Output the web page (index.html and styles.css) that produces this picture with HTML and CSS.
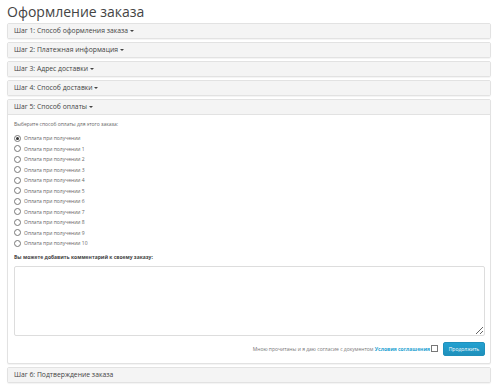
FILE: index.html
```html
<!DOCTYPE html>
<html lang="ru">
<head>
  <meta charset="UTF-8" />
  <title>Оформление заказа</title>
  <link rel="stylesheet" href="styles.css">
</head>
<body>

  <h1>Оформление заказа</h1>

  <div class="panel">
    <div class="panel-heading">Шаг 1: Способ оформления заказа <span class="caret"></span></div>
  </div>
  <div class="panel">
    <div class="panel-heading">Шаг 2: Платежная информация <span class="caret"></span></div>
  </div>
  <div class="panel">
    <div class="panel-heading">Шаг 3: Адрес доставки <span class="caret"></span></div>
  </div>
  <div class="panel">
    <div class="panel-heading">Шаг 4: Способ доставки <span class="caret"></span></div>
  </div>
  <div class="panel">
    <div class="panel-heading">Шаг 5: Способ оплаты <span class="caret"></span></div>
    <div class="panel-body">
      <p class="intro">Выберите способ оплаты для этого заказа:</p>
      <div class="radios">
        <label class="radio"><span class="dot checked"></span>Оплата при получении</label>
        <label class="radio"><span class="dot"></span>Оплата при получении 1</label>
        <label class="radio"><span class="dot"></span>Оплата при получении 2</label>
        <label class="radio"><span class="dot"></span>Оплата при получении 3</label>
        <label class="radio"><span class="dot"></span>Оплата при получении 4</label>
        <label class="radio"><span class="dot"></span>Оплата при получении 5</label>
        <label class="radio"><span class="dot"></span>Оплата при получении 6</label>
        <label class="radio"><span class="dot"></span>Оплата при получении 7</label>
        <label class="radio"><span class="dot"></span>Оплата при получении 8</label>
        <label class="radio"><span class="dot"></span>Оплата при получении 9</label>
        <label class="radio"><span class="dot"></span>Оплата при получении 10</label>
      </div>
      <p class="comment-label">Вы можете добавить комментарий к своему заказу:</p>
      <textarea class="comment"></textarea>
      <div class="buttons">
        <span class="agree">Мною прочитаны и я даю согласие с документом <a href="#">Условия соглашения</a></span>
        <span class="box"></span>
        <button>Продолжить</button>
      </div>
    </div>
  </div>
  <div class="panel">
    <div class="panel-heading">Шаг 6: Подтверждение заказа</div>
  </div>

</body>
</html>
```
FILE: styles.css
```css
body {
  margin: 0;
  padding: 0 9px 0 7px;
  font-family: "Open Sans", "DejaVu Sans", sans-serif;
  color: #666;
  background: #fff;
}
h1 {
  margin: 0;
  padding-top: 2px;
  height: 21px;
  font-size: 14px;
  line-height: 20px;
  font-weight: normal;
  color: #444;
}
.panel {
  border: 1px solid #e2e2e2;
  border-radius: 2px;
  margin-bottom: 3px;
  background: #fff;
  box-shadow: 0 1px 1px rgba(0,0,0,0.05);
}
.panel-heading {
  background: #f4f4f4;
  padding: 2px 6px;
  font-size: 6.8px;
  line-height: 10px;
  height: 10px;
  color: #444;
}
.caret {
  display: inline-block;
  width: 0;
  height: 0;
  vertical-align: middle;
  border-top: 2px solid #444;
  border-left: 2px solid transparent;
  border-right: 2px solid transparent;
}
.panel-body {
  border-top: 1px solid #e2e2e2;
  padding: 6px 5px 7px 6px;
  font-size: 5px;
}
.intro {
  margin: 0 0 5px;
  line-height: 7px;
}
.radio {
  display: flex;
  align-items: center;
  height: 10.5px;
}
.dot {
  width: 5px;
  height: 5px;
  border: 1px solid #777;
  border-radius: 50%;
  margin: 0 3px 0 0;
  box-sizing: content-box;
  position: relative;
}
.dot.checked:after {
  content: "";
  position: absolute;
  left: 1px;
  top: 1px;
  width: 3px;
  height: 3px;
  border-radius: 50%;
  background: #333;
}
.comment-label {
  margin: 4px 0 5px;
  line-height: 8px;
  font-weight: bold;
  color: #444;
}
.comment {
  display: block;
  width: 100%;
  height: 70px;
  box-sizing: border-box;
  border: 1px solid #ddd;
  border-radius: 2px;
  margin: 0;
  resize: vertical;
}
.buttons {
  display: flex;
  justify-content: flex-end;
  align-items: center;
  margin-top: 6px;
  height: 14px;
}
.agree {
  color: #777;
}
.agree a {
  color: #23a1d1;
  font-weight: bold;
  text-decoration: none;
}
.box {
  width: 5px;
  height: 5px;
  border: 1px solid #777;
  margin: 0 5px 0 1px;
}
button {
  width: 42px;
  height: 14px;
  padding: 0;
  font-family: inherit;
  font-size: 5px;
  color: #fff;
  border: 1px solid #1f90bb;
  border-radius: 2px;
  background: linear-gradient(#23a1d1, #1f90bb);
}
```
